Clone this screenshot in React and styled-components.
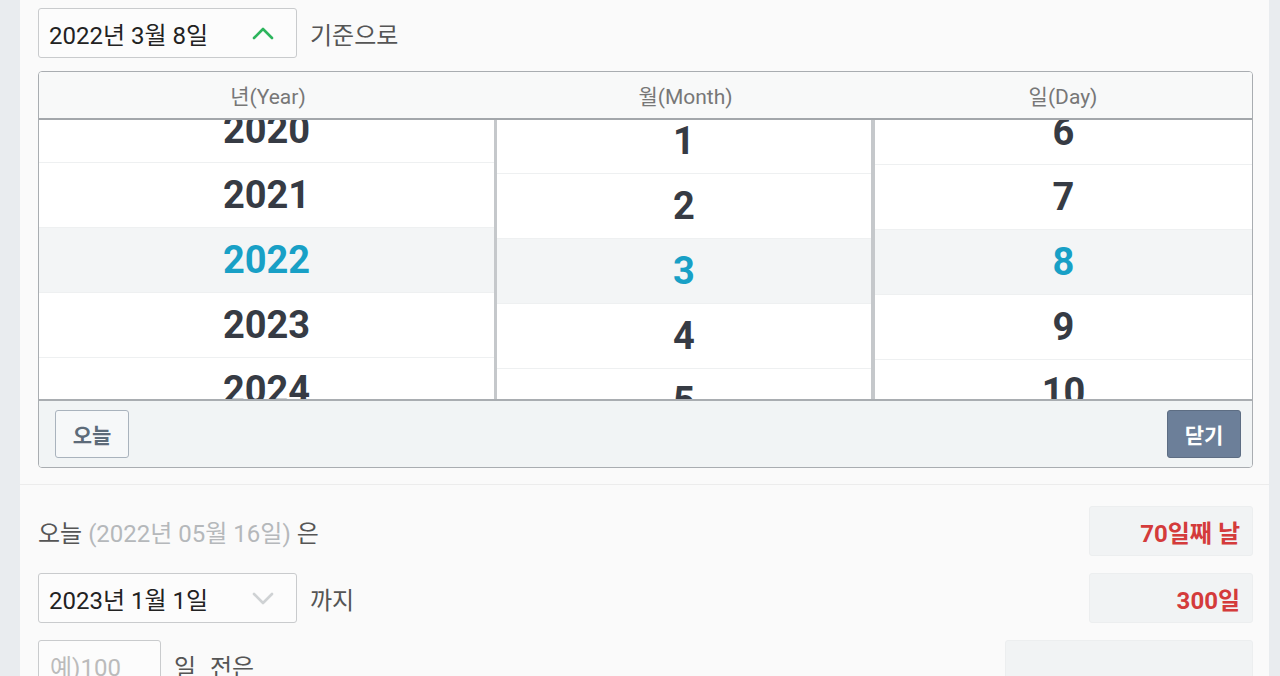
import React from "react";
import styled, { createGlobalStyle } from "styled-components";

const GlobalStyle = createGlobalStyle`
  html, body {
    margin: 0;
    height: 100%;
    overflow: hidden;
    background: #e9ecef;
    font-family: Roboto, "Noto Sans CJK KR", sans-serif;
  }
`;

const Page = styled.div`
  margin: 0 11px 0 20px;
  height: 676px;
  background: #fafafa;
  overflow: hidden;
`;

const Top = styled.div`
  padding: 8px 16px 16px 18px;
  border-bottom: 1px solid #ececec;
`;

const Line = styled.div`
  display: flex;
  align-items: center;
  gap: 13px;
  height: 50px;
`;

const Select = styled.div`
  box-sizing: border-box;
  width: 259px;
  height: 50px;
  display: flex;
  align-items: center;
  justify-content: space-between;
  padding: 0 22px 0 10px;
  background: #fcfcfc;
  border: 1px solid #c9cbcd;
  border-radius: 3px;
  font-size: 24px;
  color: #222;
`;

const Label = styled.span`
  font-size: 24px;
  color: #555;
  word-spacing: ${(p) => p.$ws || 0}px;
`;

const Picker = styled.div`
  margin-top: 13px;
  border: 1px solid #a9adb1;
  border-radius: 4px;
  overflow: hidden;
  background: #fff;
`;

const Header = styled.div`
  display: grid;
  grid-template-columns: 458px 377px 1fr;
  height: 46px;
  background: #f8f9f9;
  border-bottom: 2px solid #a3a7ab;
`;

const HeadCell = styled.div`
  display: flex;
  align-items: center;
  justify-content: center;
  font-size: 21px;
  color: #777;
`;

const Wheels = styled.div`
  display: grid;
  grid-template-columns: 455px 381px 1fr;
  height: 279px;
  overflow: hidden;
`;

const Wheel = styled.div`
  overflow: hidden;
  border-left: ${(p) => (p.$mid ? "3px solid #c5c8cb" : "none")};
  border-right: ${(p) => (p.$mid ? "4px solid #c5c8cb" : "none")};
`;

const Track = styled.div`
  margin-top: ${(p) => p.$offset}px;
`;

const Item = styled.div`
  height: 64px;
  border-bottom: 1px solid #eef0f1;
  display: flex;
  align-items: center;
  justify-content: center;
  font-size: 38px;
  font-weight: 700;
  color: ${(p) => (p.$active ? "#18a0c6" : "#363b44")};
  background: ${(p) => (p.$active ? "#f3f5f6" : "#fff")};
`;

const Footer = styled.div`
  height: 68px;
  box-sizing: border-box;
  border-top: 2px solid #a9adb1;
  background: #f1f4f5;
  display: flex;
  align-items: center;
  justify-content: space-between;
  padding: 0 11px 0 16px;
`;

const Button = styled.button`
  box-sizing: border-box;
  width: 74px;
  height: 48px;
  border-radius: 3px;
  font-family: inherit;
  font-size: 21px;
  font-weight: 700;
  border: 1px solid ${(p) => (p.$primary ? "#5d6d83" : "#a9b3bd")};
  background: ${(p) => (p.$primary ? "#6c7f99" : "#f6f8f9")};
  color: ${(p) => (p.$primary ? "#fff" : "#5d6b79")};
`;

const Bottom = styled.div`
  padding: 21px 16px 0 18px;
  display: flex;
  flex-direction: column;
  gap: 17px;
`;

const Row = styled.div`
  display: flex;
  align-items: center;
  justify-content: space-between;
  height: 50px;
`;

const Muted = styled.span`
  color: #b5b8bb;
`;

const ResultBox = styled.div`
  box-sizing: border-box;
  width: ${(p) => p.$w || 164}px;
  height: 50px;
  display: flex;
  align-items: center;
  justify-content: flex-end;
  padding-right: 12px;
  background: #f1f3f4;
  border: 1px solid #eceeef;
  border-radius: 3px;
  font-size: 24px;
  font-weight: 700;
  color: #d43b3b;
`;

const NumInput = styled.div`
  box-sizing: border-box;
  width: 123px;
  height: 50px;
  display: flex;
  align-items: center;
  padding-left: 11px;
  background: #fcfcfc;
  border: 1px solid #c9cbcd;
  border-radius: 3px;
  font-size: 24px;
  color: #bbb;
`;

const Chevron = ({ up, color }) => (
  <svg width="22" height="14" viewBox="0 0 22 14">
    <path
      d={up ? "M2 12 L11 3 L20 12" : "M2 3 L11 12 L20 3"}
      fill="none"
      stroke={color}
      strokeWidth="2.6"
      strokeLinecap="round"
      strokeLinejoin="round"
    />
  </svg>
);

const years = [2020, 2021, 2022, 2023, 2024];
const months = [1, 2, 3, 4, 5];
const days = [6, 7, 8, 9, 10];

export default function App() {
  return (
    <>
      <GlobalStyle />
      <Page>
        <Top>
          <Line>
            <Select>
              2022년 3월 8일
              <Chevron up color="#2db55d" />
            </Select>
            <Label>기준으로</Label>
          </Line>
          <Picker>
            <Header>
              <HeadCell>년(Year)</HeadCell>
              <HeadCell>월(Month)</HeadCell>
              <HeadCell>일(Day)</HeadCell>
            </Header>
            <Wheels>
              <Wheel>
                <Track $offset={-22}>
                  {years.map((y) => (
                    <Item key={y} $active={y === 2022}>
                      {y}
                    </Item>
                  ))}
                </Track>
              </Wheel>
              <Wheel $mid>
                <Track $offset={-11}>
                  {months.map((m) => (
                    <Item key={m} $active={m === 3}>
                      {m}
                    </Item>
                  ))}
                </Track>
              </Wheel>
              <Wheel>
                <Track $offset={-20}>
                  {days.map((d) => (
                    <Item key={d} $active={d === 8}>
                      {d}
                    </Item>
                  ))}
                </Track>
              </Wheel>
            </Wheels>
            <Footer>
              <Button>오늘</Button>
              <Button $primary>닫기</Button>
            </Footer>
          </Picker>
        </Top>
        <Bottom>
          <Row>
            <Label>
              오늘 <Muted>(2022년 05월 16일)</Muted> 은
            </Label>
            <ResultBox>70일째 날</ResultBox>
          </Row>
          <Row>
            <Line>
              <Select>
                2023년 1월 1일
                <Chevron color="#cfd2d4" />
              </Select>
              <Label>까지</Label>
            </Line>
            <ResultBox>300일</ResultBox>
          </Row>
          <Row>
            <Line>
              <NumInput>예)100</NumInput>
              <Label $ws={8}>일 전은</Label>
            </Line>
            <ResultBox $w={248} />
          </Row>
        </Bottom>
      </Page>
    </>
  );
}
